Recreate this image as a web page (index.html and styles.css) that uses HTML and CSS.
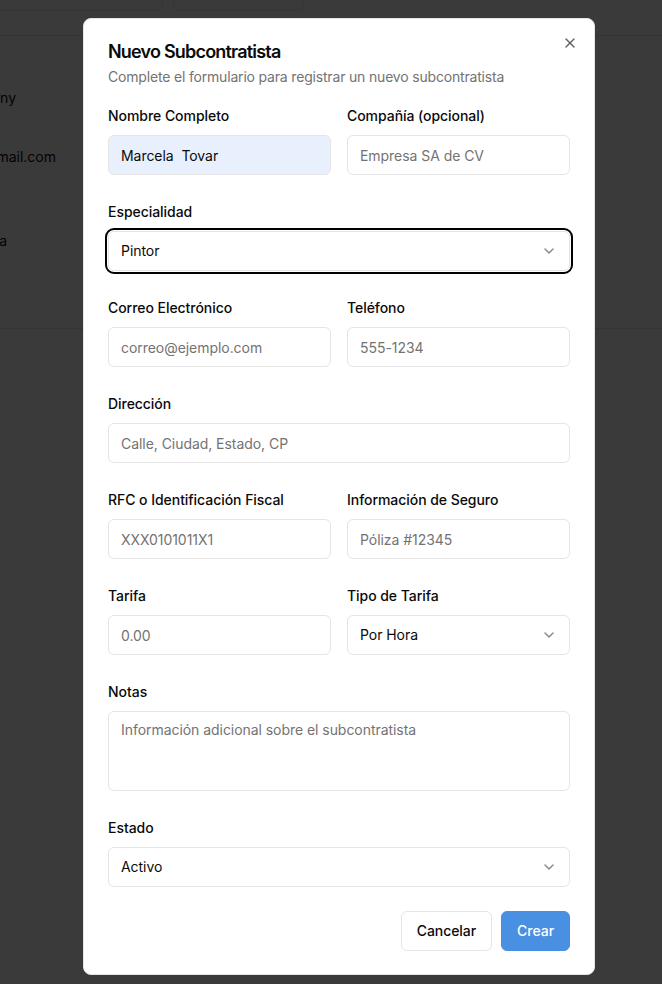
FILE: index.html
```html
<!DOCTYPE html>
<html lang="es">
<head>
<meta charset="utf-8">
<title>Nuevo Subcontratista</title>
<link rel="stylesheet" href="styles.css">
</head>
<body>
<div class="page">
  <div class="stats">
    <div class="stat stat-a"></div>
    <div class="stat stat-b"></div>
  </div>
  <div class="table">
    <div class="row row-1"><div class="cell c1"><span>Company</span></div></div>
    <div class="row row-2"><div class="cell c2"><span>contacto@gmail.com</span></div></div>
    <div class="row row-3"><div class="cell c3"><span>Pintura</span></div></div>
  </div>
</div>

<div class="overlay"></div>

<div class="dialog" role="dialog">
  <button class="close" aria-label="Cerrar">
    <svg width="16" height="16" viewBox="0 0 24 24" fill="none" stroke="currentColor" stroke-width="2" stroke-linecap="round" stroke-linejoin="round"><path d="M18 6 6 18"/><path d="m6 6 12 12"/></svg>
  </button>
  <div class="header">
    <h2 class="title">Nuevo Subcontratista</h2>
    <p class="desc">Complete el formulario para registrar un nuevo subcontratista</p>
  </div>
  <form class="form">
    <div class="grid2">
      <div class="field">
        <label class="label">Nombre Completo</label>
        <input class="input autofill" value="Marcela  Tovar">
      </div>
      <div class="field">
        <label class="label">Compañía (opcional)</label>
        <input class="input" placeholder="Empresa SA de CV">
      </div>
    </div>
    <div class="field">
      <label class="label">Especialidad</label>
      <div class="select focused">
        <span>Pintor</span>
        <svg class="chev" width="16" height="16" viewBox="0 0 24 24" fill="none" stroke="currentColor" stroke-width="2" stroke-linecap="round" stroke-linejoin="round"><path d="m6 9 6 6 6-6"/></svg>
      </div>
    </div>
    <div class="grid2">
      <div class="field">
        <label class="label">Correo Electrónico</label>
        <input class="input" placeholder="correo@ejemplo.com">
      </div>
      <div class="field">
        <label class="label">Teléfono</label>
        <input class="input" placeholder="555-1234">
      </div>
    </div>
    <div class="field">
      <label class="label">Dirección</label>
      <input class="input" placeholder="Calle, Ciudad, Estado, CP">
    </div>
    <div class="grid2">
      <div class="field">
        <label class="label">RFC o Identificación Fiscal</label>
        <input class="input" placeholder="XXX0101011X1">
      </div>
      <div class="field">
        <label class="label">Información de Seguro</label>
        <input class="input" placeholder="Póliza #12345">
      </div>
    </div>
    <div class="grid2">
      <div class="field">
        <label class="label">Tarifa</label>
        <input class="input" placeholder="0.00">
      </div>
      <div class="field">
        <label class="label">Tipo de Tarifa</label>
        <div class="select">
          <span>Por Hora</span>
          <svg class="chev" width="16" height="16" viewBox="0 0 24 24" fill="none" stroke="currentColor" stroke-width="2" stroke-linecap="round" stroke-linejoin="round"><path d="m6 9 6 6 6-6"/></svg>
        </div>
      </div>
    </div>
    <div class="field">
      <label class="label">Notas</label>
      <textarea class="textarea" placeholder="Información adicional sobre el subcontratista"></textarea>
    </div>
    <div class="field">
      <label class="label">Estado</label>
      <div class="select">
        <span>Activo</span>
        <svg class="chev" width="16" height="16" viewBox="0 0 24 24" fill="none" stroke="currentColor" stroke-width="2" stroke-linecap="round" stroke-linejoin="round"><path d="m6 9 6 6 6-6"/></svg>
      </div>
    </div>
    <div class="footer">
      <button type="button" class="btn btn-outline">Cancelar</button>
      <button type="button" class="btn btn-primary">Crear</button>
    </div>
  </form>
</div>
</body>
</html>
```

FILE: styles.css
```css
* { box-sizing: border-box; }

html, body {
  margin: 0;
  padding: 0;
  background: #ffffff;
  font-family: Inter, "Noto Sans", "Liberation Sans", sans-serif;
  color: #0a0a0a;
}

body {
  width: 662px;
  height: 984px;
  overflow: hidden;
}

/* background page */
.page {
  height: 984px;
}

.stats {
  display: flex;
  gap: 10px;
}

.stat {
  height: 11px;
  border: 1px solid #e5e5e5;
  border-top: none;
  border-radius: 0 0 8px 8px;
}

.stat-a {
  width: 163px;
  border-left: none;
  border-bottom-left-radius: 0;
}

.stat-b {
  width: 131px;
}

.table {
  margin-top: 24px;
  height: 294px;
  border-top: 1px solid #e5e5e5;
  border-bottom: 1px solid #e5e5e5;
  font-size: 14px;
  line-height: 20px;
  color: #0a0a0a;
}

.row {
  display: flex;
}

.cell {
  display: flex;
  justify-content: flex-end;
  overflow: hidden;
  white-space: nowrap;
}

.row-1 { padding-top: 52px; }
.row-2 { padding-top: 39px; }
.row-3 { padding-top: 64px; }

.c1 { width: 16px; }
.c2 { width: 56px; }
.c3 { width: 7px; }

.overlay {
  position: fixed;
  inset: 0;
  background: rgba(0, 0, 0, 0.773);
}

/* dialog */
.dialog {
  position: fixed;
  left: 83px;
  top: 18px;
  width: 512px;
  background: #ffffff;
  border: 1px solid #e5e5e5;
  border-radius: 8px;
  padding: 24px 24px 23px;
}

.close {
  position: absolute;
  right: 16px;
  top: 16px;
  width: 16px;
  height: 16px;
  padding: 0;
  border: none;
  background: transparent;
  color: #0a0a0a;
  opacity: 0.65;
  display: flex;
}

.header {
  display: flex;
  flex-direction: column;
  gap: 6px;
  margin-bottom: 19px;
}

.title {
  margin: 0;
  font-size: 18px;
  line-height: 18px;
  font-weight: 600;
  letter-spacing: -0.8px;
}

.desc {
  margin: 0;
  font-size: 14px;
  line-height: 20px;
  color: #737373;
  letter-spacing: -0.18px;
}

.form {
  display: flex;
  flex-direction: column;
  gap: 27px;
}

.grid2 {
  display: grid;
  grid-template-columns: 1fr 1fr;
  gap: 16px;
}

.field {
  display: flex;
  flex-direction: column;
  gap: 9px;
  min-width: 0;
}

.label {
  font-size: 14px;
  line-height: 20px;
  font-weight: 500;
  color: #0a0a0a;
  letter-spacing: -0.05px;
}

.input,
.select,
.textarea {
  width: 100%;
  height: 40px;
  border: 1px solid #e5e5e5;
  border-radius: 6px;
  background: #ffffff;
  padding: 0 12px;
  font-family: inherit;
  font-size: 14px;
  line-height: 20px;
  color: #0a0a0a;
  outline: none;
  margin: 0;
  letter-spacing: -0.05px;
}

.input::placeholder,
.textarea::placeholder {
  color: #737373;
  opacity: 1;
}

.autofill {
  background: #e8f0fe;
  white-space: pre;
}

.select {
  display: flex;
  align-items: center;
  justify-content: space-between;
}

.select.focused {
  outline: 2px solid #000000;
  outline-offset: 1px;
}

.chev {
  color: #0a0a0a;
  opacity: 0.5;
  flex-shrink: 0;
}

.textarea {
  height: 80px;
  padding: 8px 12px;
  resize: none;
  display: block;
}

.footer {
  display: flex;
  justify-content: flex-end;
  gap: 9px;
  margin-top: -3px;
}

.btn {
  height: 40px;
  padding: 0 15px;
  border-radius: 6px;
  font-family: inherit;
  font-size: 14px;
  font-weight: 500;
  line-height: 20px;
  cursor: pointer;
  letter-spacing: -0.05px;
}

.btn-outline {
  background: #ffffff;
  border: 1px solid #e5e5e5;
  color: #0a0a0a;
}

.btn-primary {
  background: #4a90e2;
  border: 1px solid #4a90e2;
  color: #ffffff;
}
```
